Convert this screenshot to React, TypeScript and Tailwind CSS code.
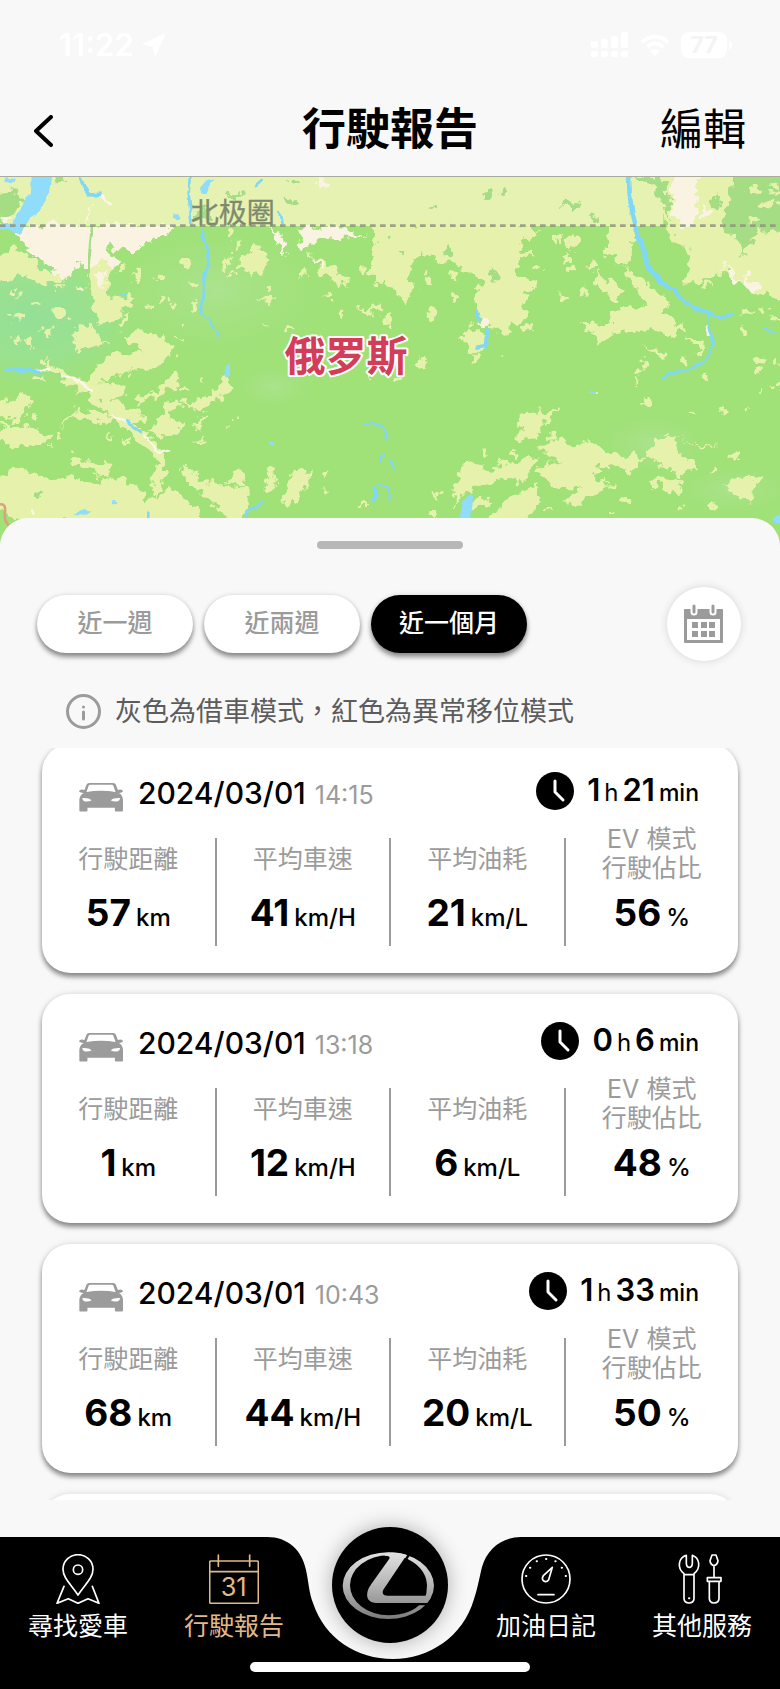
import { useState } from 'react';

type Trip = {
    date: string
    time: string
    hours: number
    minutes: number
    distance: number
    speed: number
    fuel: number
    ev: number
}

const trips: Trip[] = [
    { date: '2024/03/01', time: '14:15', hours: 1, minutes: 21, distance: 57, speed: 41, fuel: 21, ev: 56 },
    { date: '2024/03/01', time: '13:18', hours: 0, minutes: 6, distance: 1, speed: 12, fuel: 6, ev: 48 },
    { date: '2024/03/01', time: '10:43', hours: 1, minutes: 33, distance: 68, speed: 44, fuel: 20, ev: 50 },
]

const ranges = ['近一週', '近兩週', '近一個月']

// small clearings: x, y, rx, ry
const clearings = [
    [480, 325, 14, 8], [560, 285, 14, 12], [410, 325, 12, 20], [370, 290, 14, 10], [490, 390, 10, 8],
    [520, 405, 8, 8], [455, 415, 7, 9], [580, 340, 12, 10], [580, 410, 8, 16], [680, 275, 8, 16],
    [765, 235, 12, 16], [905, 310, 6, 14], [700, 315, 12, 8], [800, 355, 10, 6], [800, 390, 16, 8],
    [985, 380, 12, 8], [1020, 440, 10, 10], [1090, 300, 12, 14], [1165, 460, 14, 12], [860, 480, 14, 6],
    [800, 475, 10, 3], [50, 440, 18, 12], [115, 400, 10, 8], [180, 425, 18, 14], [145, 485, 10, 20],
    [50, 510, 7, 16], [85, 515, 14, 18], [120, 480, 8, 8], [180, 350, 10, 10], [240, 350, 8, 10],
    [45, 370, 14, 10], [370, 450, 10, 14], [555, 468, 5, 6], [540, 505, 10, 4], [520, 630, 18, 18],
    [608, 625, 7, 7], [550, 700, 14, 8], [550, 660, 18, 6], [710, 745, 12, 6], [685, 770, 12, 4],
    [600, 815, 14, 4], [330, 798, 8, 6], [380, 815, 12, 6], [110, 735, 9, 6], [50, 750, 14, 10],
    [20, 770, 16, 8], [180, 795, 10, 6], [150, 825, 12, 4], [220, 840, 6, 8], [120, 620, 14, 7],
    [130, 570, 7, 8], [975, 915, 7, 12], [980, 960, 12, 8], [1090, 1000, 12, 5], [715, 220, 8, 14],
    [690, 190, 12, 12], [1110, 625, 6, 6], [1265, 575, 12, 14], [1195, 630, 8, 8], [1295, 430, 12, 16],
    [1360, 385, 8, 8], [1365, 320, 14, 10], [1280, 335, 14, 16], [1275, 300, 10, 8], [1165, 440, 14, 16],
    [1700, 265, 7, 14], [1710, 297, 20, 10], [1775, 290, 12, 10], [1690, 385, 12, 12], [1750, 365, 14, 12],
    [1580, 475, 20, 10], [1550, 455, 12, 10], [1425, 570, 9, 12], [1510, 555, 6, 6], [1610, 300, 16, 8],
    [1600, 345, 16, 8], [1590, 190, 20, 14], [1670, 205, 18, 14], [1720, 210, 14, 22], [1580, 255, 24, 8],
    [1915, 605, 9, 12], [1910, 640, 4, 16], [1930, 580, 12, 10], [1935, 695, 12, 12], [2050, 570, 10, 8],
    [2050, 475, 10, 14], [2120, 625, 8, 8], [2170, 720, 12, 8], [2080, 728, 8, 6], [2245, 718, 5, 10],
    [2280, 570, 14, 16], [2280, 610, 6, 10], [2330, 580, 10, 14], [2285, 660, 5, 10], [2325, 650, 12, 10],
    [2235, 480, 14, 12], [2240, 425, 18, 12], [2290, 420, 12, 12], [2325, 440, 14, 8], [2120, 345, 16, 8],
    [2200, 858, 22, 8], [2140, 900, 12, 6], [1792, 670, 6, 6], [1540, 850, 10, 8], [1450, 855, 10, 8],
    [1880, 990, 14, 12], [1645, 1025, 8, 6], [1835, 1025, 10, 6], [2050, 1010, 8, 6], [2135, 1000, 8, 12],
    [1310, 975, 6, 14], [1300, 1035, 10, 6], [2000, 790, 10, 6], [1830, 955, 12, 6], [1440, 1000, 24, 14],
]

function TerrainMap() {
    return (
        <svg className="block h-full w-full" viewBox="0 21 2340 1110" preserveAspectRatio="xMidYMin slice" role="img" aria-label="地圖">
            <defs>
                <filter id="coast" x="-2%" y="-2%" width="104%" height="104%">
                    <feTurbulence type="fractalNoise" baseFrequency="0.035" numOctaves="3" seed="7" />
                    <feDisplacementMap in="SourceGraphic" scale="52" xChannelSelector="R" yChannelSelector="G" />
                </filter>
                <filter id="bank" x="-2%" y="-2%" width="104%" height="104%">
                    <feTurbulence type="fractalNoise" baseFrequency="0.03" numOctaves="2" seed="3" />
                    <feDisplacementMap in="SourceGraphic" scale="18" xChannelSelector="R" yChannelSelector="G" />
                </filter>
                <radialGradient id="wetland">
                    <stop offset="0" stopColor="#94e098" />
                    <stop offset="0.5" stopColor="#9ae193" stopOpacity="0.85" />
                    <stop offset="1" stopColor="#a0e178" stopOpacity="0" />
                </radialGradient>
                <radialGradient id="hills">
                    <stop offset="0" stopColor="#ace38f" />
                    <stop offset="1" stopColor="#a0e178" stopOpacity="0" />
                </radialGradient>
            </defs>
            <rect y="21" width="2340" height="1110" fill="#a0e178" />
            <ellipse cx="90" cy="440" rx="420" ry="260" fill="url(#wetland)" />
            <ellipse cx="650" cy="360" rx="420" ry="240" fill="url(#hills)" />
            <ellipse cx="820" cy="650" rx="140" ry="80" fill="url(#hills)" />
            <ellipse cx="1960" cy="820" rx="200" ry="110" fill="url(#hills)" />
            <ellipse cx="2200" cy="960" rx="220" ry="90" fill="url(#hills)" />

            {/* open land */}
            <rect y="21" width="1990" height="147" fill="#e6f2b2" />
            <g fill="#e6f1ab" filter="url(#coast)">
                <path d="M-40 300L40 230 90 260 130 310 230 290 200 330 120 340 60 310 20 330-40 330ZM275 225L320 250 345 290 320 340 330 380 410 378 370 425 330 462 290 455 265 350ZM365 495L430 480 500 510 520 560 470 590 400 600 330 625 265 645 290 595 340 550 425 550ZM150 570L180 600 260 640 330 640 385 650 340 690 400 720 440 740 390 752 430 790 495 850 495 910 470 985 450 940 480 870 400 800 340 745 270 680 190 625 130 590ZM220 490L270 460 320 520 270 530 230 550ZM400 690L500 640 545 610 515 655 440 685 410 715ZM565 700L650 660 680 605 698 660 640 695 590 735ZM445 795L515 685 535 710 500 740 555 770 500 805ZM580 775L620 730 605 785ZM180 765L230 715 345 740 300 758 220 742ZM-30 780L100 770 155 800 75 835-30 815ZM-30 720L60 675 100 680 70 745 20 740ZM205 870L335 885 325 925 240 895Z" />
                <path d="M-40 960L40 890 150 930 210 915 290 940 360 920 430 960 440 1000 520 955 600 1030 600 1060 60 1060-40 1000ZM545 880L620 940 740 955 750 1000 720 1060 690 1060 650 1000 560 945ZM680 940L722 895 735 945ZM798 960L808 885 832 930 808 968ZM845 1005L880 905 930 910 900 1000ZM715 275L750 240 812 260 785 315 720 300ZM925 255L1000 285 1045 348 980 325ZM1070 420L1145 400 1135 432ZM1110 160H1580L1560 250 1550 320 1612 345 1570 370 1575 430 1520 495 1480 475 1440 455 1425 360 1450 340 1390 290 1340 280 1270 250 1220 300 1245 345 1220 395 1150 350 1110 310 1130 220ZM1385 500L1420 465 1465 520 1420 555ZM1815 215L1835 150H1905L1895 260 1880 290 1830 255Z" />
                <path d="M1855 285L1935 335 2015 400 1985 430 2045 475 2010 505 1960 475 1900 485 1820 495 1790 535 1780 490 1735 455 1830 460 1835 420 1940 410 1905 350ZM1975 0H2370V380L2270 375 2180 300 2140 320 2055 350 2070 250 2015 190 1985 150ZM1930 525L1990 545 1995 568ZM2055 495L2115 520 2105 548ZM1785 305L1872 365 1855 395 1795 352ZM1545 755L1575 730 1675 715 1625 760 1602 815 1545 805 1575 770Z" />
                <path d="M1610 840L1670 785 1715 830 1765 805 1805 840 1875 860 1930 860 1895 920 1830 885 1790 885 1785 930 1830 940 1735 1010 1690 990 1740 960 1660 955 1605 900 1680 870ZM1365 925L1400 865 1475 900 1505 880 1610 865 1575 935 1510 930 1425 955 1390 965 1368 1010ZM1470 1060L1500 1000 1615 945 1625 990 1570 1060ZM1935 860L1960 815 2025 795 2035 850 2105 895 2025 915 1990 892ZM1945 930L2050 920 2025 975ZM2165 945L2200 935 2280 920 2245 1000 2200 975ZM2030 795L2100 825 2160 828 2110 835Z" />
                {clearings.map(([x, y, rx, ry]) => (
                    <ellipse key={`${x}-${y}`} cx={x} cy={y} rx={rx} ry={ry} />
                ))}
            </g>

            {/* woods inside the open land */}
            <g fill="#a5dd85" filter="url(#coast)">
                <path d="M-30 80L50 55 70 90 20 150-30 150ZM2205 0H2370V180L2270 185 2230 265 2210 185 2170 190 2180 95ZM1890 21L1990 21 2010 90 2010 160 1995 120 1960 50Z" />
                <ellipse cx="1465" cy="80" rx="14" ry="20" />
                <ellipse cx="1515" cy="60" rx="12" ry="12" />
                <ellipse cx="1298" cy="108" rx="10" ry="10" />
                <ellipse cx="1720" cy="105" rx="34" ry="9" />
                <ellipse cx="1785" cy="145" rx="12" ry="16" />
                <ellipse cx="1345" cy="240" rx="14" ry="16" />
                <ellipse cx="1480" cy="315" rx="10" ry="14" />
                <ellipse cx="1210" cy="246" rx="14" ry="5" />
                <ellipse cx="1165" cy="205" rx="10" ry="8" />
                <ellipse cx="880" cy="40" rx="20" ry="8" />
                <ellipse cx="865" cy="90" rx="18" ry="6" />
                <ellipse cx="700" cy="75" rx="26" ry="6" />
                <ellipse cx="175" cy="25" rx="18" ry="12" />
                <ellipse cx="610" cy="130" rx="32" ry="20" />
                <ellipse cx="115" cy="970" rx="10" ry="8" />
                <ellipse cx="2150" cy="100" rx="12" ry="30" />
            </g>
            <g fill="#e6f1ab" filter="url(#coast)">
                <ellipse cx="2300" cy="100" rx="26" ry="12" />
                <ellipse cx="2260" cy="60" rx="16" ry="10" />
                <ellipse cx="2325" cy="55" rx="12" ry="16" />
                <ellipse cx="2255" cy="150" rx="20" ry="14" />
            </g>

            {/* tundra */}
            <g fill="#faf3e2" filter="url(#coast)">
                <path d="M40 175L130 165H530L460 210 400 245 330 230 350 300 300 270 275 300 235 285 190 335 150 290 95 255ZM2015 0H2095L2085 170 2055 175 2015 125ZM890 175L1010 165 1095 200 1000 205 930 225 905 245ZM810 175L850 195 862 260 825 220ZM2165 280L2222 330 2200 350ZM2230 310L2280 345 2262 380ZM280 312l35-5 5 22-20 26ZM920 255l55 28-10 14Z" />
                <ellipse cx="970" cy="38" rx="22" ry="12" />
                <ellipse cx="265" cy="130" rx="6" ry="20" />
                <ellipse cx="20" cy="145" rx="16" ry="12" />
                <ellipse cx="1450" cy="455" rx="18" ry="16" />
                <ellipse cx="240" cy="352" rx="6" ry="8" />
                <ellipse cx="2115" cy="125" rx="12" ry="14" />
            </g>
            <g fill="none" stroke="#faf6ea" strokeWidth="7" filter="url(#bank)">
                <path d="M300 72L335 105M185 615L240 635 275 665M335 735L390 762M430 795L480 850 510 840M110 600H150M2117 470l12 30M95 1015l8 20" />
            </g>
            <path d="M277 170L272 215 265 290 270 380" fill="none" stroke="#a5dd85" strokeWidth="9" filter="url(#bank)" />

            {/* water */}
            <g fill="#8fdcfb" filter="url(#bank)">
                <path d="M92 10H158L150 60 125 115 90 145 60 195 35 185 40 150 65 110 90 70ZM-10 165L45 160 45 182-10 182ZM605 75L600 50 622 25 640 30 620 70ZM20 21L45 30 40 40 15 35ZM1375 1070L1388 995 1412 970 1415 1000 1402 1070ZM2320 1050l30-30v50ZM672 590l18-8v38l-10 8ZM220 1035l30-15 22 5-15 12Z" />
                <ellipse cx="530" cy="140" rx="8" ry="7" />
                <ellipse cx="815" cy="820" rx="8" ry="5" />
                <ellipse cx="345" cy="995" rx="10" ry="5" />
                <ellipse cx="1778" cy="668" rx="10" ry="5" />
            </g>
            <g fill="none" stroke="#80d8f8" strokeLinecap="round" strokeLinejoin="round" filter="url(#bank)">
                <path d="M242 21L250 50 265 72 300 70" strokeWidth="11" />
                <path d="M570 15L566 70 575 165M838 125L845 160M785 30L768 45" strokeWidth="8" />
                <path d="M608 180L605 200 625 230 624 280 612 330 608 380 600 430" strokeWidth="8" />
                <path d="M600 430L625 450 640 475 655 500M360 370h16" strokeWidth="4" />
                <path d="M22 598L70 600 120 605" strokeWidth="11" />
                <path d="M385 755L400 775 420 788" strokeWidth="10" />
                <path d="M1092 764Q1150 755 1158 785L1162 812M1140 872Q1145 850 1160 856M1168 872L1184 893M1172 990Q1170 945 1140 945" strokeWidth="6" />
                <path d="M1120 955Q1132 970 1122 990" strokeWidth="13" />
                <path d="M733 1060L740 1022 780 1005 785 990" strokeWidth="7" />
                <path d="M445 1044v-15" strokeWidth="8" />
                <path d="M1888 10Q1885 90 1905 160T1950 300L1975 325" strokeWidth="14" />
                <path d="M1945 295L1975 330 2010 350 2040 380 2080 415 2120 430" strokeWidth="12" />
                <path d="M2120 430L2170 440 2198 430M2125 430L2127 480 2140 515 2125 560Q2095 600 2040 603L2000 612 1985 625M2288 475L2325 492" strokeWidth="7" />
                <path d="M1430 428l8 20M1463 480l-4 50-28 4" strokeWidth="10" />
            </g>
            <path d="M0 1003Q18 1000 15 1025T22 1060 14 1110" fill="none" stroke="#dca27e" strokeWidth="8" />

            <path d="M0 167H2340" stroke="#8d957f" strokeOpacity="0.85" strokeWidth="8" strokeDasharray="17 13" />
            <text x="698" y="158" textAnchor="middle" fontSize="84" fill="#7d8b6c" stroke="#7d8b6c" strokeWidth="1" className="font-['Noto_Sans_CJK_SC',sans-serif]">北极圈</text>
            <text x="1038" y="602" textAnchor="middle" fontSize="123" fill="#d43d58" stroke="#fff" strokeWidth="12" strokeLinejoin="round" paintOrder="stroke" className="font-['Noto_Sans_CJK_SC',sans-serif] font-bold">俄罗斯</text>
        </svg>
    )
}

function StatusBar() {
    return (
        <div className="flex h-[90px] items-center justify-between pr-12 pl-[59px] text-white">
            <div className="flex items-center gap-2">
                <span className="text-[31px] font-semibold">11:22</span>
                <svg width="24" height="24" viewBox="0 0 24 24" fill="currentColor" aria-hidden="true">
                    <path d="M23 1L13 23 11 13 1 11Z" stroke="currentColor" strokeLinejoin="round" />
                </svg>
            </div>
            <div className="flex items-center gap-[11px]">
                <svg width="38" height="26" viewBox="0 0 38 26" fill="currentColor" aria-hidden="true">
                    <rect x="0" y="9" width="7" height="7" rx="2" />
                    <rect x="10" y="7" width="7" height="9" rx="2" />
                    <rect x="20" y="4" width="7" height="12" rx="2" />
                    <rect x="30" y="0" width="7" height="16" rx="2" />
                    <rect x="0" y="19" width="7" height="6" rx="2" />
                    <rect x="10" y="19" width="7" height="6" rx="2" />
                    <rect x="20" y="19" width="7" height="6" rx="2" />
                    <rect x="30" y="19" width="7" height="6" rx="2" />
                </svg>
                <svg width="30" height="23" viewBox="0 0 30 23" aria-hidden="true">
                    <path d="M2 8Q15-3 28 8M7 13Q15 6 23 13" fill="none" stroke="currentColor" strokeWidth="4" />
                    <path d="M10 17Q15 13 20 17L15 22Z" fill="currentColor" />
                </svg>
                <div className="flex items-center gap-[2px]">
                    <span className="flex h-[26px] w-[46px] items-center justify-center rounded-lg bg-white text-[23px] font-bold text-[#f4f4f4]">77</span>
                    <span className="h-2 w-[3px] rounded-r bg-white" />
                </div>
            </div>
        </div>
    )
}

function CarIcon() {
    return (
        <svg className="mt-1 shrink-0" width="44" height="29" viewBox="0 0 130 85" fill="#9b9b9b" fillRule="evenodd" aria-hidden="true">
            <path d="M30 0H101Q107 0 109 5L115 20Q129 17 130 24 129 28 118 29 130 36 130 50V81Q130 84 127 84H109Q106 84 106 81V73H25V81Q25 84 22 84H4Q1 84 1 81V50Q1 36 14 29 1 28 0 24 2 17 16 20L22 5Q24 0 30 0ZM33 5Q29 5 28 9L22 26Q65 19 108 26L102 9Q101 5 97 5ZM10 44Q10 53 18 54 30 55 37 51 30 43 10 44ZM121 44Q101 43 94 51 101 55 113 54 121 53 121 44Z" />
        </svg>
    )
}

function ClockIcon() {
    return (
        <svg className="shrink-0" width="38" height="38" viewBox="0 0 38 38" aria-hidden="true">
            <circle cx="19" cy="19" r="19" />
            <path d="M19 9V20L27 28" fill="none" stroke="#fff" strokeWidth="3" strokeLinecap="round" strokeLinejoin="round" />
        </svg>
    )
}

function Stat({ label, value, unit }: { label: string; value: number; unit: string }) {
    const twoLines = label.includes('\n')
    return (
        <div className="flex flex-col items-center pt-[2px]">
            <dt className={`flex min-h-[58px] items-center text-center text-[25px] leading-[29px] whitespace-pre text-[#9b9b9b] ${twoLines ? '' : 'pt-[10px]'}`}>{label}</dt>
            <dd className="mt-2 flex items-baseline gap-[5px] leading-[44px]">
                <span className="text-[37px] font-bold">{value}</span>
                <span className="text-[24px] font-medium">{unit}</span>
            </dd>
        </div>
    )
}

function Divider() {
    return <div className="mt-[15px] h-[108px] w-[2px] bg-[#9b9b9b]" />
}

function TripCard({ trip }: { trip: Trip }) {
    return (
        <li className="rounded-[28px] bg-white pt-7 pb-[27px] shadow-[0_4px_5px_rgba(0,0,0,0.42),0_0_6px_rgba(0,0,0,0.12)]">
            <div className="flex h-[38px] items-center justify-between pr-[39px] pl-[37px]">
                <div className="flex items-center pt-2">
                    <CarIcon />
                    <time className="ml-[15px] flex items-baseline gap-[9px]">
                        <span className="text-[30px] leading-9 font-medium">{trip.date}</span>
                        <span className="text-[25px] text-[#9b9b9b]">{trip.time}</span>
                    </time>
                </div>
                <div className="flex items-center">
                    <ClockIcon />
                    <div className="ml-[13px] flex items-baseline gap-1 text-[24px] leading-9">
                        <span className="text-[31px] font-semibold">{trip.hours}</span>
                        <span>h</span>
                        <span className="text-[31px] font-semibold">{trip.minutes}</span>
                        <span className="text-[23px] font-medium">min</span>
                    </div>
                </div>
            </div>
            <dl className="mt-[13px] grid grid-cols-[1fr_2px_1fr_2px_1fr_2px_1fr]">
                <Stat label="行駛距離" value={trip.distance} unit="km" />
                <Divider />
                <Stat label="平均車速" value={trip.speed} unit="km/H" />
                <Divider />
                <Stat label="平均油耗" value={trip.fuel} unit="km/L" />
                <Divider />
                <Stat label={'EV 模式\n行駛佔比'} value={trip.ev} unit="%" />
            </dl>
        </li>
    )
}

function LogoButton() {
    return (
        <button aria-label="首頁" className="-mt-[10px] size-[116px] shrink-0 rounded-full bg-black shadow-[0_0_20px_rgba(0,0,0,0.3)]">
            <svg viewBox="24 21 348 348" className="size-full" aria-hidden="true">
                <defs>
                    <linearGradient id="chrome" x1="0" y1="97" x2="0" y2="297" gradientUnits="userSpaceOnUse">
                        <stop offset="0" stopColor="#e2e2e2" />
                        <stop offset="0.5" stopColor="#b4b4b4" />
                        <stop offset="1" stopColor="#7c7c7c" />
                    </linearGradient>
                </defs>
                <path fill="url(#chrome)" fillRule="evenodd" d="M56 197A137 100 0 0 1 330 197 137 100 0 0 1 56 197ZM78 196A116 90 0 0 0 194 286C240 286 275 270 290 250L302 238Q309 220 309 196C309 150 262 106 194 106A116 90 0 0 0 78 196Z" />
                <path d="M240 126L262 94M262 252H335" stroke="#000" strokeWidth="7" />
                <path fill="url(#chrome)" d="M182 99Q225 94 248 105L178 209Q170 226 190 227H308L321 228Q317 240 309 249H155Q123 246 131 213 134 203 142 192L196 116Q201 107 182 107Z" />
            </svg>
        </button>
    )
}

function NavItem({ label, active, children }: { label: string; active?: boolean; children: React.ReactNode }) {
    return (
        <a href="#" aria-current={active ? 'page' : undefined} className={`flex flex-col items-center pt-[17px] ${active ? 'text-[#e0b98a]' : 'text-white'}`}>
            <svg width="50" height="50" viewBox="0 0 150 150" fill="none" stroke="currentColor" strokeWidth="5" strokeLinecap="round" strokeLinejoin="round" aria-hidden="true">
                {children}
            </svg>
            <span className="mt-1 text-[25px] leading-9 whitespace-nowrap">{label}</span>
        </a>
    )
}

function BottomNav() {
    return (
        <nav className="relative mt-[37px] h-[152px] shrink-0">
            {/* bar with the notch for the logo */}
            <div className="absolute inset-0 flex">
                <div className="flex-1 bg-black" />
                <svg width="268" height="152" viewBox="0 0 268 152" aria-hidden="true">
                    <path d="M0 0H11C32 0 46 13 50 33C53 47 53 56 57 66C69 102 101 122 137 122C173 122 207 100 218 62C222 50 223 42 226 30C231 12 246 0 265 0H268V152H0Z" />
                </svg>
                <div className="flex-1 bg-black" />
            </div>
            <div className="relative grid grid-cols-5 items-start justify-items-center">
                <NavItem label="尋找愛車">
                    <path d="M75 123C55 92 30 72 30 46a45 44 0 0 1 90 0C120 72 95 92 75 123Z" />
                    <circle cx="75" cy="47" r="14" />
                    <path d="M33 97L12 148 46 134 75 148 105 134 138 148 118 97" />
                </NavItem>
                <NavItem label="行駛報告" active>
                    <rect x="2" y="21" width="146" height="127" rx="4" />
                    <path d="M2 53H148M28 3V37M122 3V37" />
                    <text x="74" y="125" textAnchor="middle" fontSize="76" fill="currentColor" stroke="none">31</text>
                </NavItem>
                <LogoButton />
                <NavItem label="加油日記">
                    <circle cx="75" cy="75" r="72" />
                    <path d="M94 40L83 77Q77 86 68 81 61 74 67 65ZM51 122H99" />
                    <path d="M15 66h1M27 41h1M47 22h1M75 15h1M103 22h1M122 41h1M134 66h1" strokeWidth="6" />
                </NavItem>
                <NavItem label="其他服務">
                    <path d="M28 4C4 12-1 42 21 59V134Q22 147 36 147 50 147 51 134V59C73 42 68 12 46 4V28Q45 40 37 40 29 40 28 28ZM22 62H50" />
                    <path d="M36 133h1" strokeWidth="6" />
                    <path d="M105 3H117L123 20Q122 32 111 35 100 32 99 20ZM111 36V70M91 71H132V82H91ZM97 82V134Q98 147 111 147 125 147 126 134V82" />
                </NavItem>
            </div>
            <div className="absolute bottom-[17px] left-1/2 h-[10px] w-[280px] -translate-x-1/2 rounded-full bg-white" />
        </nav>
    )
}

export default function App() {
    const [range, setRange] = useState('近一個月')

    return (
        <main className="flex h-screen flex-col overflow-hidden bg-[#f8f8f8] font-[Inter,'Noto_Sans_CJK_TC',sans-serif] text-black">
            <header className="shrink-0 border-b border-[#a9ab9c]">
                <StatusBar />
                <div className="grid h-[86px] grid-cols-[1fr_auto_1fr] items-center px-[34px] pb-2">
                    <button aria-label="返回" className="mt-1 justify-self-start">
                        <svg width="19" height="32" viewBox="0 0 19 32" fill="none" stroke="#000" strokeWidth="4" strokeLinecap="round" strokeLinejoin="round">
                            <path d="M17 2L2 16 17 30" />
                        </svg>
                    </button>
                    <h1 className="text-[44px] leading-[64px] font-bold">行駛報告</h1>
                    <button className="justify-self-end text-[43px] leading-[64px]">編輯</button>
                </div>
            </header>

            <div className="h-[370px] shrink-0">
                <TerrainMap />
            </div>

            {/* sheet pulled up over the map */}
            <section className="relative -mt-[29px] flex min-h-0 flex-1 flex-col rounded-t-[28px] bg-[#f8f8f8]">
                <div className="mx-auto mt-[23px] h-2 w-[146px] shrink-0 rounded-full bg-[#b7b7b7]" />

                <div className="mt-[38px] flex items-center justify-between pr-[39px] pl-[37px]">
                    <div className="flex gap-[11px]">
                        {ranges.map((r) => (
                            <button
                                key={r}
                                onClick={() => setRange(r)}
                                aria-pressed={range === r}
                                className={`h-[58px] w-[156px] rounded-full text-[25px] font-medium shadow-[0_4px_5px_rgba(0,0,0,0.42),0_0_5px_rgba(0,0,0,0.12)] ${range === r ? 'bg-black text-white' : 'bg-white text-[#9b9b9b]'}`}
                            >
                                {r}
                            </button>
                        ))}
                    </div>
                    <button aria-label="選擇日期" className="flex size-[74px] items-center justify-center rounded-full bg-white shadow-[0_0_8px_rgba(0,0,0,0.14)]">
                        <svg width="40" height="40" viewBox="0 0 40 40" fill="#9b9b9b" aria-hidden="true">
                            <path fillRule="evenodd" d="M1 5H38Q39 5 39 6V38Q39 39 38 39H1Q0 39 0 38V6Q0 5 1 5ZM3 15V36H36V15Z" />
                            <path d="M10 2V8M29 2V8" stroke="#fff" strokeWidth="7" strokeLinecap="round" />
                            <path d="M10 2V8M29 2V8" stroke="#9b9b9b" strokeWidth="3" strokeLinecap="round" />
                            <path d="M8 18h6v6H8ZM17 18h6v6h-6ZM25 18h6v6h-6ZM8 27h6v6H8ZM17 27h6v6h-6ZM25 27h6v6h-6Z" />
                        </svg>
                    </button>
                </div>

                <div className="mt-[33px] flex h-[35px] shrink-0 items-center gap-[14px] px-[66px]">
                    <svg width="35" height="35" viewBox="0 0 35 35" fill="none" stroke="#9b9b9b" strokeWidth="3" strokeLinecap="round" aria-hidden="true">
                        <circle cx="17.5" cy="17.5" r="16" />
                        <path d="M17.500 18V25M17.500 13V13.100" />
                    </svg>
                    <p className="text-[27px] leading-[35px] text-[#5c5c5c]">灰色為借車模式，紅色為異常移位模式</p>
                </div>

                <div className="mt-[19px] min-h-0 flex-1 overflow-hidden px-[42px]">
                    <ul className="-mt-1 flex flex-col gap-[21px]">
                        {trips.map((trip) => (
                            <TripCard key={trip.time} trip={trip} />
                        ))}
                        <li className="h-24 rounded-[28px] bg-white shadow-[0_0_6px_rgba(0,0,0,0.12)]" />
                    </ul>
                </div>

                <BottomNav />
            </section>
        </main>
    )
}
